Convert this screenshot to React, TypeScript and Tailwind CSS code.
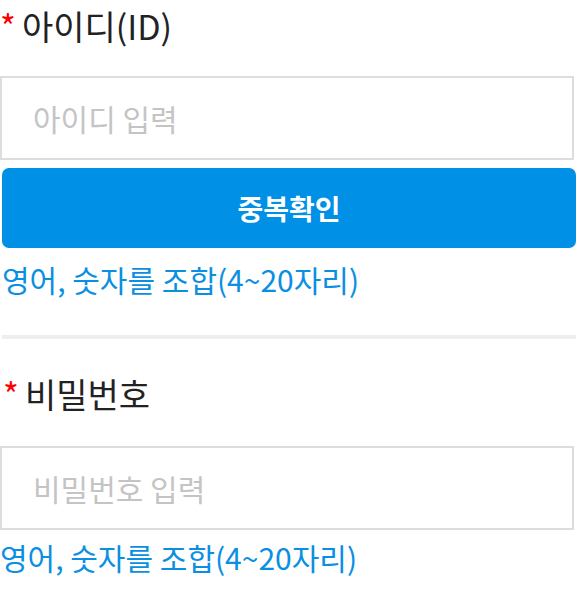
export default function App() {
  return (
    <div
      className="w-[576px] bg-white"
      style={{ fontFamily: '"Noto Sans CJK KR", "Noto Sans", sans-serif' }}
    >
      <div className="pb-[35px]">
        <label className="block pt-[2px] text-[34px] leading-[48px] text-[#222]">
          <span className="mr-[6px] text-[#f00]">*</span>
          아이디(ID)
        </label>
        <input
          placeholder="아이디 입력"
          className="mt-[26px] block h-[84px] w-[574px] border-2 border-[#ddd] bg-white px-[31px] text-[30px] outline-none placeholder:text-[#c4c4c4]"
        />
        <button className="mt-[8px] ml-[2px] flex h-[80px] w-[574px] items-center justify-center rounded-[7px] bg-[#0090e6] text-[28px] font-bold text-white">
          중복확인
        </button>
        <p className="mt-[10px] pl-[2px] text-[30px] leading-[42px] text-[#0a8fe2]">
          영어, 숫자를 조합(4~20자리)
        </p>
      </div>
      <div className="ml-[2px] h-[4px] bg-[#eee]" />
      <div className="pt-[31px]">
        <label className="block pl-[3px] text-[34px] leading-[48px] text-[#222]">
          <span className="mr-[6px] text-[#f00]">*</span>
          비밀번호
        </label>
        <input
          type="password"
          placeholder="비밀번호 입력"
          className="mt-[28px] block h-[84px] w-[574px] border-2 border-[#ddd] bg-white px-[31px] text-[30px] outline-none placeholder:text-[#c4c4c4]"
        />
        <p className="mt-[6px] text-[30px] leading-[42px] text-[#0a8fe2]">
          영어, 숫자를 조합(4~20자리)
        </p>
      </div>
    </div>
  );
}
